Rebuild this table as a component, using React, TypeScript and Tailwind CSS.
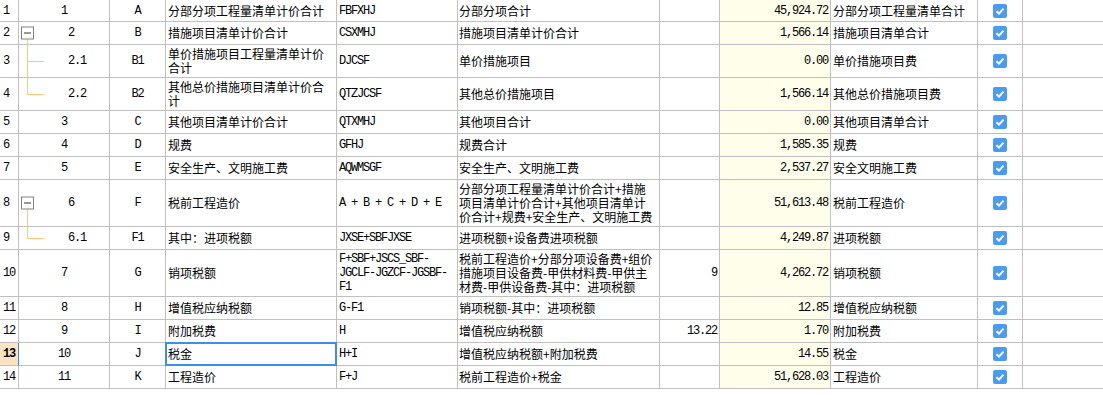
import React from "react";

type Row = {
  rn: number;
  seq: string;
  level: 0 | 1 | 2; // 0 plain, 1 parent with box, 2 child
  tree?: "mid" | "end";
  code: string;
  name: string[];
  formula: string[];
  desc: string[];
  rate: string;
  amount: string;
  kind: string;
  h: string;
};

const rows: Row[] = [
  { rn: 1, seq: "1", level: 0, code: "A", name: ["分部分项工程量清单计价合计"], formula: ["FBFXHJ"], desc: ["分部分项合计"], rate: "", amount: "45,924.72", kind: "分部分项工程量清单合计", h: "h-[22px]" },
  { rn: 2, seq: "2", level: 1, code: "B", name: ["措施项目清单计价合计"], formula: ["CSXMHJ"], desc: ["措施项目清单计价合计"], rate: "", amount: "1,566.14", kind: "措施项目清单合计", h: "h-[23px]" },
  { rn: 3, seq: "2.1", level: 2, tree: "mid", code: "B1", name: ["单价措施项目工程量清单计价", "合计"], formula: ["DJCSF"], desc: ["单价措施项目"], rate: "", amount: "0.00", kind: "单价措施项目费", h: "h-[33px]" },
  { rn: 4, seq: "2.2", level: 2, tree: "end", code: "B2", name: ["其他总价措施项目清单计价合", "计"], formula: ["QTZJCSF"], desc: ["其他总价措施项目"], rate: "", amount: "1,566.14", kind: "其他总价措施项目费", h: "h-[33px]" },
  { rn: 5, seq: "3", level: 0, code: "C", name: ["其他项目清单计价合计"], formula: ["QTXMHJ"], desc: ["其他项目合计"], rate: "", amount: "0.00", kind: "其他项目清单合计", h: "h-[23px]" },
  { rn: 6, seq: "4", level: 0, code: "D", name: ["规费"], formula: ["GFHJ"], desc: ["规费合计"], rate: "", amount: "1,585.35", kind: "规费", h: "h-[23px]" },
  { rn: 7, seq: "5", level: 0, code: "E", name: ["安全生产、文明施工费"], formula: ["AQWMSGF"], desc: ["安全生产、文明施工费"], rate: "", amount: "2,537.27", kind: "安全文明施工费", h: "h-[23px]" },
  { rn: 8, seq: "6", level: 1, code: "F", name: ["税前工程造价"], formula: ["A + B + C + D + E"], desc: ["分部分项工程量清单计价合计+措施", "项目清单计价合计+其他项目清单计", "价合计+规费+安全生产、文明施工费"], rate: "", amount: "51,613.48", kind: "税前工程造价", h: "h-[47px]" },
  { rn: 9, seq: "6.1", level: 2, tree: "end", code: "F1", name: ["其中：进项税额"], formula: ["JXSE+SBFJXSE"], desc: ["进项税额+设备费进项税额"], rate: "", amount: "4,249.87", kind: "进项税额", h: "h-[23px]" },
  { rn: 10, seq: "7", level: 0, code: "G", name: ["销项税额"], formula: ["F+SBF+JSCS_SBF-", "JGCLF-JGZCF-JGSBF-", "F1"], desc: ["税前工程造价+分部分项设备费+组价", "措施项目设备费-甲供材料费-甲供主", "材费-甲供设备费-其中：进项税额"], rate: "9", amount: "4,262.72", kind: "销项税额", h: "h-[47px]" },
  { rn: 11, seq: "8", level: 0, code: "H", name: ["增值税应纳税额"], formula: ["G-F1"], desc: ["销项税额-其中：进项税额"], rate: "", amount: "12.85", kind: "增值税应纳税额", h: "h-[23px]" },
  { rn: 12, seq: "9", level: 0, code: "I", name: ["附加税费"], formula: ["H"], desc: ["增值税应纳税额"], rate: "13.22", amount: "1.70", kind: "附加税费", h: "h-[23px]" },
  { rn: 13, seq: "10", level: 0, code: "J", name: ["税金"], formula: ["H+I"], desc: ["增值税应纳税额+附加税费"], rate: "", amount: "14.55", kind: "税金", h: "h-[23px]" },
  { rn: 14, seq: "11", level: 0, code: "K", name: ["工程造价"], formula: ["F+J"], desc: ["税前工程造价+税金"], rate: "", amount: "51,628.03", kind: "工程造价", h: "h-[23px]" },
];

const mono = "font-['Liberation_Mono',monospace] text-[12px] tracking-[-1.2px] leading-[14px]";
const cjk = "font-['Noto_Sans_CJK_SC','Noto_Sans',sans-serif] text-[12px] leading-[14px]";
const cell = "border-r border-b border-[#c0c0c0] flex items-center shrink-0";

const Checkbox = () => (
  <svg width="14" height="14" viewBox="0 0 14 14">
    <rect x="0" y="0" width="14" height="14" rx="2" fill="#4a9bf6" />
    <path d="M3.5 7.2 L6 9.6 L10.5 4.6" fill="none" stroke="#fff" strokeWidth="2" />
  </svg>
);

const Lines = ({ lines }: { lines: string[] }) => (
  <div className="flex flex-col">
    {lines.map((l, i) => (
      <span key={i} className="whitespace-nowrap">{l}</span>
    ))}
  </div>
);

export default function App() {
  return (
    <div className="w-[1103px] h-[413px] bg-white overflow-hidden text-black">
      {rows.map((r) => {
        const active = r.rn === 13;
        return (
          <div key={r.rn} className={`flex ${r.h}`}>
            <div
              className={`${cell} ${mono} w-[19px] pl-[3px] ${active ? "bg-[#ffe3c2] font-bold border-r-[#3b8fe9]" : ""}`}
            >
              {r.rn}
            </div>
            <div
              className={`${cell} ${mono} w-[91px] relative justify-center ${
                r.level === 1 ? "pl-[14px]" : r.level === 2 ? "pl-[26px]" : ""
              }`}
            >
              {r.level === 1 && (
                <>
                  <div className="absolute left-[2px] top-1/2 -translate-y-1/2 w-[13px] h-[13px] border border-[#808080] bg-white flex items-center justify-center z-10">
                    <div className="w-[7px] h-px bg-[#333]" />
                  </div>
                  <div className="absolute left-[8px] top-1/2 -bottom-px w-px bg-[#ffc77d]" />
                </>
              )}
              {r.level === 2 && (
                <>
                  <div
                    className={`absolute left-[8px] -top-px w-px bg-[#ffc77d] ${
                      r.tree === "mid" ? "-bottom-px" : "h-[calc(50%+1px)]"
                    }`}
                  />
                  <div className="absolute left-[8px] top-1/2 w-[17px] h-px bg-[#ffc77d]" />
                </>
              )}
              <span>{r.seq}</span>
            </div>
            <div className={`${cell} ${mono} w-[56px] justify-center`}>{r.code}</div>
            <div className={`${cell} ${cjk} w-[171px] pl-[2px] relative`}>
              <Lines lines={r.name} />
              {active && <div className="absolute -inset-px border-2 border-[#3b8fe9]" />}
            </div>
            <div className={`${cell} ${mono} w-[121px] pl-[2px]`}>
              <Lines lines={r.formula} />
            </div>
            <div className={`${cell} ${cjk} w-[202px] pl-px`}>
              <Lines lines={r.desc} />
            </div>
            <div className={`${cell} ${mono} w-[60px] justify-end pr-[2px]`}>{r.rate}</div>
            <div className={`${cell} ${mono} w-[111px] justify-end pr-[2px] bg-[#fefeea]`}>{r.amount}</div>
            <div className={`${cell} ${cjk} w-[147px] pl-[2px]`}>{r.kind}</div>
            <div className={`${cell} w-[45px] justify-center`}>
              <Checkbox />
            </div>
            <div className="flex-1 border-b border-[#c0c0c0]" />
          </div>
        );
      })}
    </div>
  );
}
